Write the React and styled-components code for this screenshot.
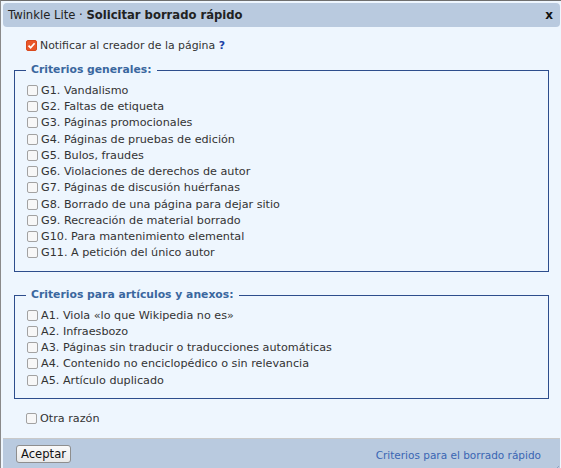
import React from 'react'
import styled, { createGlobalStyle } from 'styled-components';

const generales = [
  'G1. Vandalismo',
  'G2. Faltas de etiqueta',
  'G3. Páginas promocionales',
  'G4. Páginas de pruebas de edición',
  'G5. Bulos, fraudes',
  'G6. Violaciones de derechos de autor',
  'G7. Páginas de discusión huérfanas',
  'G8. Borrado de una página para dejar sitio',
  'G9. Recreación de material borrado',
  'G10. Para mantenimiento elemental',
  'G11. A petición del único autor',
]

const articulos = [
  'A1. Viola «lo que Wikipedia no es»',
  'A2. Infraesbozo',
  'A3. Páginas sin traducir o traducciones automáticas',
  'A4. Contenido no enciclopédico o sin relevancia',
  'A5. Artículo duplicado',
]

const Check = ({ checked }) => (
  <Box checked={checked}>
    {checked && (
      <svg width="9" height="9" viewBox="0 0 9 9">
        <path d="M1.5 4.6 L3.6 6.7 L7.6 2.2" fill="none" stroke="#fff" strokeWidth="1.7" />
      </svg>
    )}
  </Box>
)

const Option = ({ label, checked }) => (
  <Row>
    <Check checked={checked} />
    <span>{label}</span>
  </Row>
)

const App = () => {
  return (
    <Dialog>
      <GlobalStyle />
      <TitleBar>
        <Title>Twinkle Lite · <b>Solicitar borrado rápido</b></Title>
        <Close>x</Close>
      </TitleBar>
      <Content>
        <Row>
          <Check checked />
          <Notify>Notificar al creador de la página <Help>?</Help></Notify>
        </Row>
        <Group>
          <Legend>Criterios generales:</Legend>
          {generales.map((g) => <Option key={g} label={g} />)}
        </Group>
        <Group second>
          <Legend>Criterios para artículos y anexos:</Legend>
          {articulos.map((a) => <Option key={a} label={a} />)}
        </Group>
        <Other>
          <Option label="Otra razón" />
        </Other>
      </Content>
      <ButtonPane>
        <Button>Aceptar</Button>
        <Link>Criterios para el borrado rápido</Link>
        <Grip>
          <svg width="12" height="12" viewBox="0 0 12 12">
            <path d="M11 3 L3 11 M11 6 L6 11 M11 9 L9 11" stroke="#8fa3c0" strokeWidth="1" />
          </svg>
        </Grip>
      </ButtonPane>
    </Dialog>
  )
}

export default App

const GlobalStyle = createGlobalStyle`
  body {
    margin: 0;
    background: #ffffff;
    overflow: hidden;
  }
`;
const Dialog = styled.div`
  width: 563px;
  box-sizing: border-box;
  border: 1px solid #6f6f6f;
  border-left-color: #8a8a8a;
  padding: 2px;
  background: #eef6fe;
  font-family: "DejaVu Sans", sans-serif;
  color: #333;
`;
const TitleBar = styled.div`
  height: 24px;
  display: flex;
  align-items: center;
  justify-content: space-between;
  padding: 0 7px 0 5px;
  background: #b9cadf;
  border-radius: 4px;
`;
const Title = styled.div`
  font-size: 11.6px;
  color: #222;
  b {
    font-weight: bold;
  }
`;
const Close = styled.span`
  font-size: 12px;
  font-weight: bold;
  color: #111;
`;
const Content = styled.div`
  padding: 10px 11px 11px;
  font-size: 11.2px;
`;
const Row = styled.div`
  display: flex;
  align-items: center;
  height: 16.25px;
  padding-left: 12px;
  white-space: nowrap;
`;
const Notify = styled.span`
  font-size: 10.9px;
`;
const Box = styled.span`
  width: 11px;
  height: 11px;
  box-sizing: border-box;
  margin-right: 3px;
  border-radius: 2px;
  display: flex;
  align-items: center;
  justify-content: center;
  border: 1px solid ${(props) => props.checked ? "#d9491d" : "#a2a2a2"};
  background: ${(props) => props.checked ? "#e9572b" : "#f7f7f7"};
`;
const Help = styled.b`
  color: #1a3fa6;
`;
const Group = styled.fieldset`
  margin: ${(props) => props.second ? "15px 0 0" : "9px 0 0"};
  padding: 4px 12px 10px;
  border: 1px solid #2d4d8c;
  min-width: 0;
  ${Row} {
    padding-left: 0;
  }
`;
const Legend = styled.legend`
  padding: 0 5px;
  margin-left: -1px;
  line-height: 16px;
  font-size: 10.8px;
  font-weight: bold;
  color: #3a679f;
`;
const Other = styled.div`
  margin-top: 11px;
`;
const ButtonPane = styled.div`
  position: relative;
  height: 30px;
  border-top: 1px solid #c9c9c9;
  background: #b9cadf;
  display: flex;
  align-items: flex-start;
  justify-content: space-between;
  padding: 6px 19px 0 13px;
`;
const Button = styled.button`
  height: 18px;
  padding: 0 4px;
  font-family: "DejaVu Sans", sans-serif;
  font-size: 11.6px;
  color: #111;
  background: linear-gradient(#fafafa, #e9e9e9);
  border: 1px solid #8e8e8e;
  border-radius: 3px;
`;
const Link = styled.a`
  margin-top: 4px;
  font-size: 10.5px;
  color: #3a66b3;
`;
const Grip = styled.span`
  position: absolute;
  right: 0;
  bottom: 0;
  display: flex;
`;
